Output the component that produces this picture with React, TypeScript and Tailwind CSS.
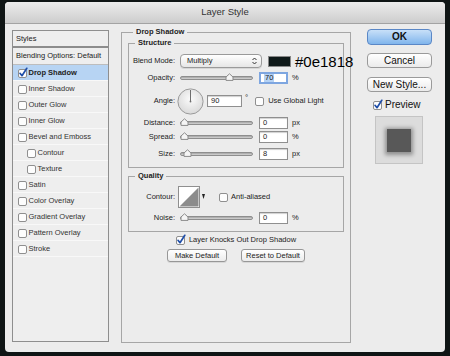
import React from 'react';

const txt = 'text-[7.5px] leading-none text-[#222] whitespace-nowrap';

function Check({ on }: { on?: boolean }) {
  return (
    <svg width="10" height="10" viewBox="0 0 10 10" className="shrink-0 overflow-visible">
      <rect x="0.5" y="1.5" width="8" height="8" rx="1.5" fill="#fdfdfd" stroke="#8f8f8f" />
      {on && (
        <path
          d="M2 5.3 L4 7.7 L8.8 0.3"
          fill="none"
          stroke="#1f4ea8"
          strokeWidth="1.7"
          strokeLinecap="round"
          strokeLinejoin="round"
        />
      )}
    </svg>
  );
}

function Label({ children }: { children: React.ReactNode }) {
  return <div className={`${txt} w-[46px] shrink-0 text-right`}>{children}</div>;
}

function Slider({ pct }: { pct: number }) {
  return (
    <div className="relative ml-[5px] flex h-[12px] w-[73px] shrink-0 items-center">
      <div className="h-[4px] w-full rounded-full border border-[#8e8e8e] bg-gradient-to-b from-[#a3a3a3] to-[#d6d6d6]" />
      <svg
        width="9"
        height="8"
        viewBox="0 0 9 8"
        className="absolute top-[1px]"
        style={{ left: `${Math.round(pct * 64)}px` }}
      >
        <path d="M1 7.4 V4 L4.5 0.8 L8 4 V7.4 Z" fill="#f5f5f5" stroke="#8a8a8a" strokeLinejoin="round" />
      </svg>
    </div>
  );
}

function Field({ value, focus }: { value: string; focus?: boolean }) {
  return (
    <div
      className={`ml-[6px] flex h-[12px] w-[29px] shrink-0 items-center bg-white pl-[3px] ${
        focus ? 'border-2 border-[#7ea6e0]' : 'border border-[#8f8f8f] shadow-[inset_0_1px_1px_#d0d0d0]'
      }`}
    >
      <span className={`${txt} ${focus ? 'bg-[#b5d2f4] px-[1px]' : ''}`}>{value}</span>
    </div>
  );
}

function SliderRow({ label, pct, value, unit, mt, focus }: { label: string; pct: number; value: string; unit: string; mt: string; focus?: boolean }) {
  return (
    <div className={`flex h-[12px] w-[214px] items-center ${mt}`}>
      <Label>{label}</Label>
      <Slider pct={pct} />
      <Field value={value} focus={focus} />
      <span className={`${txt} ml-[4px]`}>{unit}</span>
    </div>
  );
}

function Btn({ children, w }: { children: React.ReactNode; w: string }) {
  return (
    <div
      className={`${w} flex h-[13px] items-center justify-center rounded-[3px] border border-[#979797] bg-gradient-to-b from-white to-[#ececec] shadow-[0_1px_0_#d8d8d8] ${txt}`}
    >
      {children}
    </div>
  );
}

function BigBtn({ children, primary, mt }: { children: React.ReactNode; primary?: boolean; mt: string }) {
  return (
    <div
      className={`${mt} flex w-[65px] items-center justify-center rounded-[4px] border text-[10px] leading-none text-[#111] ${
        primary
          ? 'h-[16px] border-[#5a87c6] bg-gradient-to-b from-[#c8e0f8] to-[#80b5ec] font-bold'
          : 'h-[15px] border-[#9a9a9a] bg-gradient-to-b from-white to-[#ebebeb]'
      }`}
    >
      {children}
    </div>
  );
}

const styles = [
  { name: 'Drop Shadow', on: true },
  { name: 'Inner Shadow' },
  { name: 'Outer Glow' },
  { name: 'Inner Glow' },
  { name: 'Bevel and Emboss' },
  { name: 'Contour', indent: true },
  { name: 'Texture', indent: true },
  { name: 'Satin' },
  { name: 'Color Overlay' },
  { name: 'Gradient Overlay' },
  { name: 'Pattern Overlay' },
  { name: 'Stroke' },
];

export default function App() {
  return (
    <div className="h-[356px] w-[450px] bg-[#0f1515] pl-[5px] pt-[2px] font-['Liberation_Sans',Arial,sans-serif]">
      <div className="flex h-[350px] w-[440px] flex-col overflow-hidden rounded-[4px] bg-[#ececec]">
        {/* title bar */}
        <div className="flex h-[22px] shrink-0 items-center justify-center border-b border-[#a3a3a3] bg-gradient-to-b from-[#ececec] to-[#cdcdcd] text-[9.5px] text-[#333]">
          Layer Style
        </div>

        <div className="flex pl-[7px] pt-[6px]">
          {/* styles list */}
          <div className="flex h-[312px] w-[97px] shrink-0 flex-col border border-[#8e8e8e] bg-[#eeeeee]">
            <div className={`${txt} flex h-[17px] shrink-0 items-center border-b-2 border-[#8c8c8c] pl-[3px]`}>Styles</div>
            <div className={`${txt} flex h-[17px] shrink-0 items-center border-b border-[#bdbdbd] pl-[3px]`}>
              Blending Options: Default
            </div>
            {styles.map((s) => (
              <div
                key={s.name}
                className={`flex h-[16px] shrink-0 items-center border-b border-[#f8f8f8] ${
                  s.indent ? 'pl-[14px]' : 'pl-[5px]'
                } ${s.on ? 'bg-[#b7d4f3]' : ''}`}
              >
                <Check on={s.on} />
                <span className={`${txt} ml-[0.5px] ${s.on ? 'font-bold' : 'text-[#333]'}`}>{s.name}</span>
              </div>
            ))}
          </div>

          {/* drop shadow group */}
          <fieldset className="-mt-[3px] ml-[12px] h-[316px] w-[230px] min-w-0 shrink-0 border border-[#a6a6a6] px-[6px]">
            <legend className="ml-[5px] px-[3px] text-[7.5px] font-bold leading-[10px] text-[#222]">Drop Shadow</legend>

            <fieldset className="mt-[1px] h-[130px] min-w-0 border border-[#a6a6a6] pt-[6px]">
              <legend className="ml-[6px] px-[3px] text-[7.5px] font-bold leading-[10px] text-[#222]">Structure</legend>

              <div className="flex h-[14px] w-[214px] items-center">
                <Label>Blend Mode:</Label>
                <div className="ml-[5px] flex h-[14px] w-[82px] shrink-0 items-center justify-between rounded-[4px] border border-[#9a9a9a] bg-gradient-to-b from-white to-[#e6e6e6] pl-[6px] pr-[4px] shadow-[0_1px_0_#d6d6d6]">
                  <span className={txt}>Multiply</span>
                  <svg width="5" height="8" viewBox="0 0 5 8">
                    <path d="M0.5 3 L2.5 1 L4.5 3 M0.5 5 L2.5 7 L4.5 5" fill="none" stroke="#333" strokeWidth="1" />
                  </svg>
                </div>
                <div className="ml-[6px] h-[11px] w-[23px] shrink-0 border border-[#888] bg-[#0e1818]" />
                <span className="ml-[4px] text-[15px] leading-none text-black">#0e1818</span>
              </div>

              <SliderRow label="Opacity:" pct={0.7} value="70" unit="%" mt="mt-[4px]" focus />

              <div className="mt-[3px] flex h-[28px] w-[214px] items-center">
                <Label>Angle:</Label>
                <svg width="27" height="27" viewBox="0 0 27 27" className="ml-[2px] shrink-0">
                  <defs>
                    <radialGradient id="dial" cx="50%" cy="40%" r="60%">
                      <stop offset="0" stopColor="#fbfbfb" />
                      <stop offset="1" stopColor="#d9d9d9" />
                    </radialGradient>
                  </defs>
                  <circle cx="13.5" cy="13.5" r="12.6" fill="url(#dial)" stroke="#9a9a9a" />
                  <line x1="13.5" y1="13.5" x2="13.5" y2="2" stroke="#6f6f6f" strokeWidth="1" />
                  <circle cx="13.5" cy="13.5" r="0.9" fill="#6f6f6f" />
                </svg>
                <div className="ml-[3px] flex h-[12px] w-[35px] shrink-0 items-center border border-[#8f8f8f] bg-white pl-[3px] shadow-[inset_0_1px_1px_#d0d0d0]">
                  <span className={txt}>90</span>
                </div>
                <span className="-mt-[6px] ml-[3px] text-[8px] leading-none text-[#222]">°</span>
                <div className="ml-[7px] flex items-center gap-[3px]">
                  <Check />
                  <span className={txt}>Use Global Light</span>
                </div>
              </div>

              <SliderRow label="Distance:" pct={0} value="0" unit="px" mt="mt-[2px]" />
              <SliderRow label="Spread:" pct={0} value="0" unit="%" mt="mt-[2px]" />
              <SliderRow label="Size:" pct={0.04} value="8" unit="px" mt="mt-[5px]" />
            </fieldset>

            <fieldset className="mt-[3px] h-[61px] min-w-0 border border-[#a6a6a6] pt-[5px]">
              <legend className="ml-[6px] px-[3px] text-[7.5px] font-bold leading-[10px] text-[#222]">Quality</legend>

              <div className="flex h-[22px] w-[214px] items-center">
                <Label>Contour:</Label>
                <svg width="22" height="22" viewBox="0 0 22 22" className="ml-[3px] shrink-0">
                  <rect x="0.5" y="0.5" width="21" height="21" fill="#fff" stroke="#8f8f8f" />
                  <polygon points="1.5,20.5 20.5,1.5 20.5,20.5" fill="#8c8c8c" />
                </svg>
                <svg width="5" height="10" viewBox="0 0 5 10" className="ml-[1px] shrink-0">
                  <path d="M1 2 L4 2 L2.5 7 Z" fill="#222" />
                </svg>
                <div className="ml-[13px] flex items-center gap-[2px]">
                  <Check />
                  <span className={txt}>Anti-aliased</span>
                </div>
              </div>

              <SliderRow label="Noise:" pct={0} value="0" unit="%" mt="mt-[4px]" />
            </fieldset>

            <div className="mt-[3px] flex h-[10px] items-center justify-center gap-[3px]">
              <Check on />
              <span className={txt}>Layer Knocks Out Drop Shadow</span>
            </div>

            <div className="mt-[4px] flex justify-center gap-[14px]">
              <Btn w="w-[60px]">Make Default</Btn>
              <Btn w="w-[64px]">Reset to Default</Btn>
            </div>
          </fieldset>

          {/* buttons column */}
          <div className="-mt-[1px] ml-[16px] flex w-[65px] shrink-0 flex-col">
            <BigBtn primary mt="mt-0">OK</BigBtn>
            <BigBtn mt="mt-[8px]">Cancel</BigBtn>
            <BigBtn mt="mt-[9px]">New Style...</BigBtn>
            <div className="mt-[8px] flex h-[10px] items-center gap-[2px] pl-[6px]">
              <Check on />
              <span className="text-[10px] leading-none text-[#111]">Preview</span>
            </div>
            <div className="ml-[8px] mt-[6px] flex h-[48px] w-[48px] items-center justify-center border border-[#c4c4c4] bg-[#dcdcdc]">
              <div className="h-[23px] w-[24px] bg-[#585858] shadow-[0_1px_4px_2px_rgba(0,0,0,0.35)]" />
            </div>
          </div>
        </div>
      </div>
    </div>
  );
}
